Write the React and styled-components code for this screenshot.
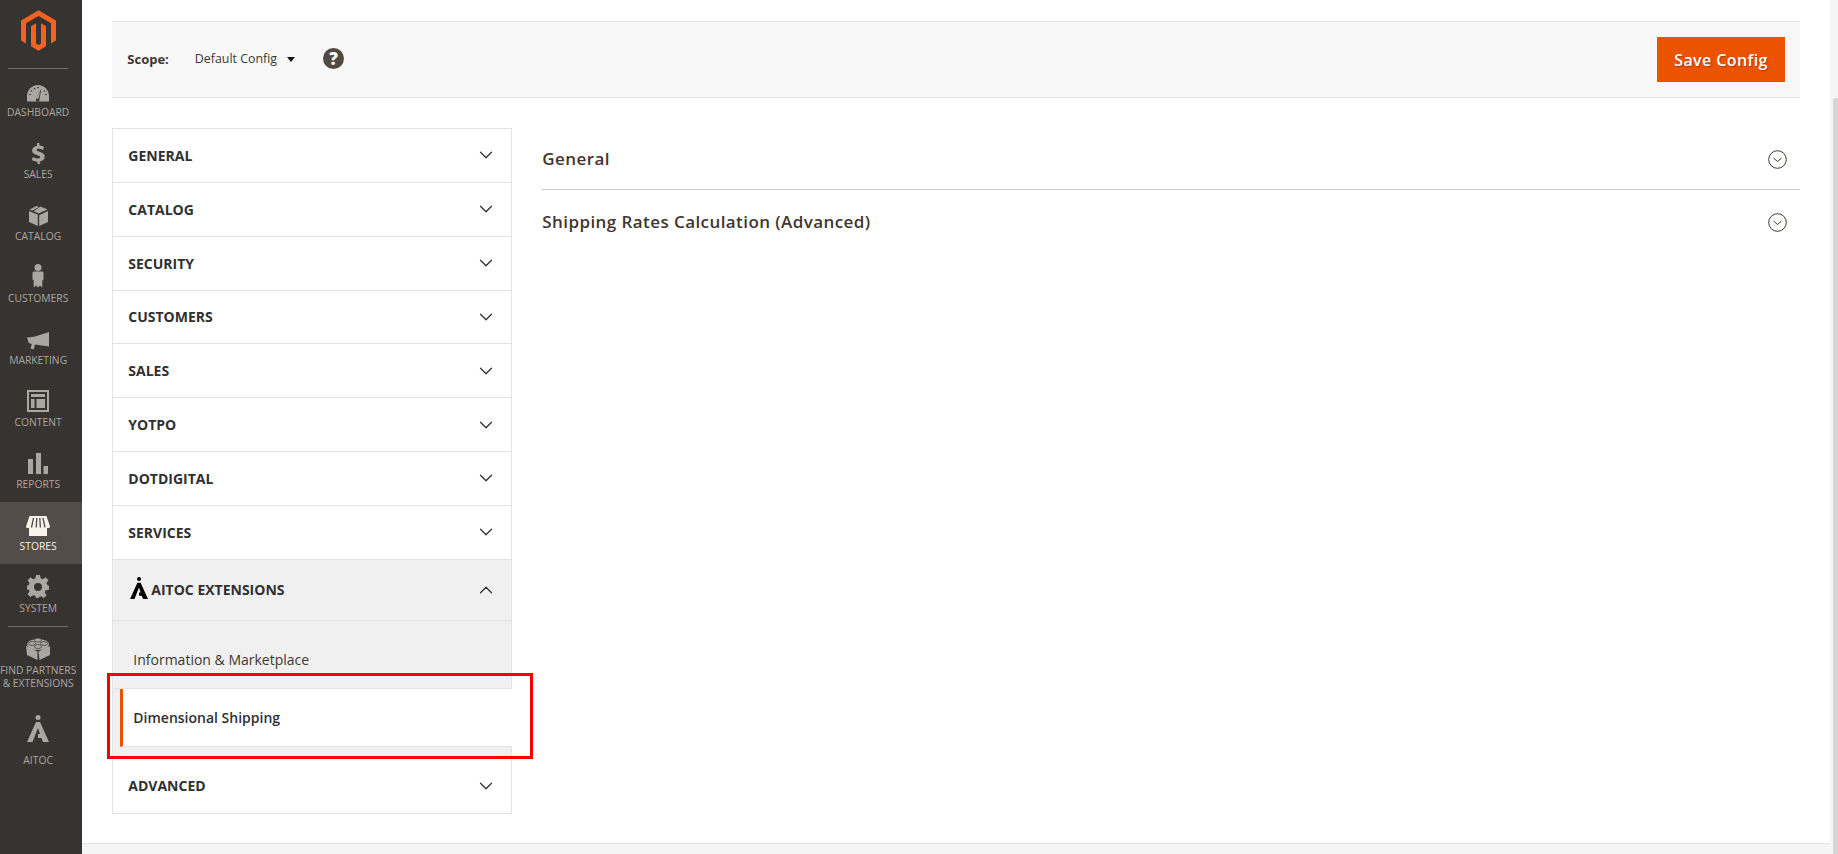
import React from 'react';
import styled, { createGlobalStyle } from 'styled-components';
import { ChevronDown, ChevronUp } from 'lucide-react';

const GlobalStyle = createGlobalStyle`
  html, body {
    margin: 0;
    height: 100%;
    overflow: hidden;
    background: #fff;
    font-family: "Open Sans", "Liberation Sans", sans-serif;
  }
  * { box-sizing: border-box; }
`;

const Page = styled.div`
  display: flex;
  width: 1838px;
  height: 854px;
  overflow: hidden;
`;

const Sidebar = styled.nav`
  flex: 0 0 82px;
  background: #373330;
  display: flex;
  flex-direction: column;
  align-items: stretch;
`;

const LogoBox = styled.div`
  height: 68px;
  padding: 10px 6px 0 0;
  display: flex;
  justify-content: center;
`;

const Divider = styled.div`
  height: 1px;
  margin: 0 14px -1px 8px;
  background: #736e69;
  position: relative;
`;

const NavItem = styled.div`
  height: ${p => p.$height || 62}px;
  padding-right: 6px;
  display: flex;
  flex-direction: column;
  align-items: center;
  background: ${p => (p.$active ? '#524d49' : 'transparent')};
  color: ${p => (p.$active ? '#f7f3eb' : '#aaa6a0')};
`;

const NavIcon = styled.div`
  height: ${p => p.$height || 35}px;
  width: 100%;
  display: flex;
  align-items: flex-end;
  justify-content: center;
  padding-bottom: 1px;
`;

const NavLabel = styled.div`
  font-size: 10.3px;
  line-height: 13px;
  text-align: center;
  white-space: nowrap;
  text-transform: uppercase;
  margin-top: ${p => p.$gap || 3}px;
`;

const Main = styled.main`
  flex: 1;
  display: flex;
  flex-direction: column;
  min-width: 0;
`;

const Content = styled.div`
  flex: 1;
  padding: 21px 30px 0;
`;

const ScopeBar = styled.div`
  height: 77px;
  display: flex;
  align-items: center;
  justify-content: space-between;
  padding: 0 15px;
  background: #f8f8f8;
  border-top: 1px solid #e3e3e3;
  border-bottom: 1px solid #e3e3e3;
`;

const ScopeLeft = styled.div`
  display: flex;
  align-items: center;
  margin-bottom: 2px;
`;

const ScopeLabel = styled.span`
  font-size: 13px;
  font-weight: 700;
  color: #41362f;
`;

const ScopeValue = styled.span`
  font-size: 12.4px;
  color: #41362f;
  margin-left: 26px;
`;

const Caret = styled.span`
  width: 0;
  height: 0;
  margin: 2px 0 0 10px;
  border-left: 4px solid transparent;
  border-right: 4px solid transparent;
  border-top: 5px solid #111;
`;

const Help = styled.span`
  width: 21px;
  height: 21px;
  margin-left: 28px;
  border-radius: 50%;
  background: #514943;
  color: #fff;
  font-size: 17px;
  font-weight: 800;
  line-height: 21px;
  text-align: center;
`;

const SaveButton = styled.button`
  width: 128px;
  height: 45px;
  border: 0;
  padding: 0;
  background: #eb5202;
  color: #fff;
  font-family: inherit;
  font-size: 16px;
  font-weight: 600;
  letter-spacing: 0.4px;
  text-shadow: 1px 1px 1px rgba(0, 0, 0, 0.3);
`;

const Columns = styled.div`
  display: flex;
  margin-top: 30px;
  gap: 30px;
  align-items: flex-start;
`;

const Tabs = styled.div`
  flex: 0 0 400px;
  display: flex;
  flex-direction: column;
  border: 1px solid #e3e3e3;
`;

const TabHead = styled.div`
  height: ${p => p.$height || 53.85}px;
  flex: none;
  display: flex;
  align-items: center;
  padding: 0 14px 0 15px;
  font-size: 14px;
  font-weight: 700;
  text-transform: uppercase;
  color: #303030;
  background: ${p => (p.$open ? '#f0f0f0' : '#fff')};
  border-bottom: ${p => (p.$last ? 0 : '1px solid #e3e3e3')};
  svg.chev { margin-left: auto; color: #303030; }
`;

const SubList = styled.div`
  flex: none;
  display: flex;
  flex-direction: column;
  background: #f0f0f0;
`;

const SubItem = styled.div`
  height: 68px;
  padding: 29px 0 0 20px;
  font-size: 14px;
  line-height: 20px;
  color: #41362f;
  border-bottom: 1px solid #e3e3e3;
`;

const SubItemActive = styled.div`
  height: 58px;
  display: flex;
  align-items: center;
  margin: 0 -1px 0 7px;
  padding-left: 10px;
  background: #fff;
  border-left: 3px solid #eb5202;
  border-bottom: 1px solid #e3e3e3;
  font-size: 14px;
  font-weight: 600;
  color: #303030;
`;

const SubGap = styled.div`
  height: 12px;
`;

const HeadIcon = styled.svg`
  width: 18px;
  height: 22px;
  margin: -4px 3px 0 2px;
`;

const Sections = styled.div`
  flex: 1;
  min-width: 0;
`;

const Section = styled.div`
  height: ${p => p.$height}px;
  display: flex;
  align-items: center;
  padding-right: 13px;
  font-size: 17px;
  font-weight: 600;
  letter-spacing: 0.42px;
  color: #41362f;
  border-bottom: ${p => (p.$line ? '1px solid #cccccc' : 0)};
`;

const SectionIcon = styled.svg`
  width: 19px;
  height: 19px;
  margin: 2px 0 0 auto;
`;

const Footer = styled.footer`
  height: 11px;
  flex: none;
  background: #f5f5f5;
  border-top: 1px solid #e3e3e3;
`;

const ScrollTrack = styled.div`
  flex: 0 0 8px;
  background: #f5f5f5;
  padding: 98px 0 0 3px;
`;

const ScrollThumb = styled.div`
  height: 756px;
  background: #d6d6d6;
  border-radius: 3px 0 0 0;
`;

const Annotation = styled.div`
  position: absolute;
  left: 107px;
  top: 673px;
  width: 426px;
  height: 86px;
  border: 3px solid #fa0000;
  pointer-events: none;
`;

const MagentoLogo = () => (
  <svg width="35" height="41" viewBox="1.6 0 20.8 24">
    <path fill="#f26322" d="M12 24l-4.455-2.572v-12l2.97-1.715v12.001l1.485.902 1.485-.902V7.713l2.971 1.715v12L12 24zM22.391 6v12l-2.969 1.714V7.713L12 3.43 4.574 7.713v12.001L1.609 18V6L12 0l10.391 6z" />
  </svg>
);

const G = '#aaa6a0';

const AitocMark = () => (
  <svg width="22" height="27" viewBox="0 0 22 27">
    <circle cx="11" cy="2.500" r="2.500" fill={G} />
    <path fill={G} d="M9 7h4l9 20h-6l-1.600-4H11v-4h2l-2-6-5.500 14H0z" />
  </svg>
);

const icons = {
  dashboard: (
    <svg width="22" height="17" viewBox="0 0 22 17">
      <path fill={G} d="M11 0C4.900 0 0 5 0 11.200V16.500h22v-5.300C22 5 17.100 0 11 0z" />
      <path fill="#373330" d="M14.500 3.500 12.800 12l-.6 4.500H9.300l-.3-2.500z" />
      <path fill={G} d="M13.400 6.500 11.800 12.600c-.2.900-.8 1.500-1.500 1.300-.7-.2-.9-1-.5-1.700z" />
      <g fill="#373330">
        <circle cx="4.500" cy="6" r=".8" /><circle cx="7.500" cy="3.600" r=".8" /><circle cx="11" cy="2.600" r=".8" />
        <circle cx="17.500" cy="6" r=".8" /><circle cx="19" cy="9.500" r=".8" /><circle cx="3" cy="9.500" r=".8" />
      </g>
    </svg>
  ),
  sales: (
    <svg width="14" height="21" viewBox="0 0 14 21">
      <path fill={G} d="M6 0h2.400v2.500c1.800.2 3.300.7 4.600 1.500l-1 3C10.700 6.200 9.200 5.700 7.700 5.700c-1.300 0-2 .5-2 1.200 0 .8.900 1.200 3 1.900 3.500 1.100 5 2.600 5 5 0 2.400-1.700 4.200-4.900 4.700V21H6.400v-2.300c-2.200-.1-4.200-.7-5.600-1.600l1-3.100c1.500.9 3.400 1.500 5.100 1.500 1.400 0 2.300-.5 2.300-1.400 0-.8-.8-1.300-2.700-1.900C3 11.600 1.100 10.100 1.100 7.500c0-2.400 1.700-4.200 4.900-4.800z" />
    </svg>
  ),
  catalog: (
    <svg width="19" height="20" viewBox="0 0 19 20">
      <path fill={G} d="M9.500 9 0 5v11l8.800 4V9.300zM10.200 9.300V20l8.800-4V5z" />
      <path fill={G} d="M7.500 0 .6 3.600 3 4.700 10 1zM11.500.6 4.600 5.300l4.900 2.200 9-3.900z" />
    </svg>
  ),
  customers: (
    <svg width="12" height="24" viewBox="0 0 12 24">
      <circle cx="6" cy="3.500" r="3.500" fill={G} />
      <path fill={G} d="M2 7.500h8c1 0 1.500.6 1.500 1.500v6.500l-1.200 1v7L8 21.500l-2 2-2-2-2.300 2v-7l-1.200-1V9c0-.9.500-1.500 1.500-1.500z" />
    </svg>
  ),
  marketing: (
    <svg width="22" height="18" viewBox="0 0 22 18">
      <path fill={G} d="M22 0v14.500L8 12.500 6.500 17.500l-3-1L4.800 12 1.800 11 0 5.500l3.500-.2L8 4.500z" />
    </svg>
  ),
  content: (
    <svg width="22" height="22" viewBox="0 0 22 22">
      <path fill={G} fillRule="evenodd" d="M0 0h22v22H0zM2 2v18h18V2z" />
      <path fill={G} d="M4 4h14v3H4zM4 9h3.500v9H4zM9.500 9H18v9H9.500z" />
    </svg>
  ),
  reports: (
    <svg width="20" height="21" viewBox="0 0 20 21">
      <path fill={G} d="M0 6h5v15H0zM8 0h5v21H8zM15.500 13H20v8h-4.500z" />
    </svg>
  ),
  stores: (
    <svg width="24" height="20" viewBox="0 0 24 20">
      <path fill="#f7f3eb" d="M3 12h18v8H3z" />
      <path fill="#f7f3eb" d="M3.500 0h17L24 10.500c0 1-1 1.500-2 1.500H2c-1 0-2-.5-2-1.500z" />
      <path stroke="#524d49" strokeWidth="1.300" d="M7.500 2 5.500 11.500M10.800 2l-.6 9.500M13.800 2l.6 9.500M17 2l2 9.500" />
    </svg>
  ),
  system: (
    <svg width="22" height="23" viewBox="0 0 22 23">
      <path fill={G} fillRule="evenodd" d="M9 0h4l.6 3.200 2.300 1L18.600 2.300l2.800 2.900-1.900 2.700 1 2.300L22 10.800v4l-3.300.5-1 2.300 1.900 2.700-2.800 2.700-2.700-1.800-2.300.9L12 23H9l-.6-1.900-2.300-.9-2.700 1.800-2.800-2.700 1.900-2.700-1-2.300L0 14.800v-4l1.500-.6 1-2.300L.6 5.200l2.800-2.900 2.700 1.900 2.300-1zM11 8a4 4 0 1 0 0 8 4 4 0 0 0 0-8z" />
    </svg>
  ),
  partners: (
    <svg width="24" height="23" viewBox="0 0 24 23">
      <path fill={G} d="M0 9l11.500 5.500V23L1 18zM12.500 14.500 24 9v9l-10.500 5z" />
      <ellipse cx="12" cy="7.500" rx="11" ry="5.500" fill={G} />
      <ellipse cx="12" cy="3" rx="3.500" ry="2" fill={G} stroke="#373330" strokeWidth=".7" />
      <ellipse cx="6" cy="6.500" rx="3.500" ry="2" fill={G} stroke="#373330" strokeWidth=".7" />
      <ellipse cx="18" cy="6.500" rx="3.500" ry="2" fill={G} stroke="#373330" strokeWidth=".7" />
      <ellipse cx="12" cy="9.500" rx="3.500" ry="2" fill={G} stroke="#373330" strokeWidth=".7" />
    </svg>
  ),
};

const navItems = [
  { label: 'Dashboard', icon: icons.dashboard },
  { label: 'Sales', icon: icons.sales },
  { label: 'Catalog', icon: icons.catalog },
  { label: 'Customers', icon: icons.customers },
  { label: 'Marketing', icon: icons.marketing },
  { label: 'Content', icon: icons.content },
  { label: 'Reports', icon: icons.reports },
  { label: 'Stores', icon: icons.stores, active: true },
  { label: 'System', icon: icons.system },
];

const tabs = ['General', 'Catalog', 'Security', 'Customers', 'Sales', 'Yotpo', 'Dotdigital', 'Services'];

const CircleChevron = () => (
  <SectionIcon viewBox="0 0 19 19">
    <circle cx="9.500" cy="9.500" r="8.800" fill="none" stroke="#41362f" strokeWidth="1" />
    <path d="M5.500 8l4 3.500 4-3.500" fill="none" stroke="#41362f" strokeWidth="1" />
  </SectionIcon>
);

const App = () => {
  return (
    <Page>
      <GlobalStyle />
      <Sidebar>
        <LogoBox><MagentoLogo /></LogoBox>
        <Divider />
        {navItems.map(item => (
          <NavItem key={item.label} $active={item.active}>
            <NavIcon>{item.icon}</NavIcon>
            <NavLabel>{item.label}</NavLabel>
          </NavItem>
        ))}
        <Divider />
        <NavItem $height={79}>
          <NavIcon>{icons.partners}</NavIcon>
          <NavLabel>Find Partners<br />&amp; Extensions</NavLabel>
        </NavItem>
        <NavItem>
          <NavIcon $height={38}><AitocMark /></NavIcon>
          <NavLabel $gap={11}>Aitoc</NavLabel>
        </NavItem>
      </Sidebar>
      <Main>
        <Content>
          <ScopeBar>
            <ScopeLeft>
              <ScopeLabel>Scope:</ScopeLabel>
              <ScopeValue>Default Config</ScopeValue>
              <Caret />
              <Help>?</Help>
            </ScopeLeft>
            <SaveButton>Save Config</SaveButton>
          </ScopeBar>
          <Columns>
            <Tabs>
              {tabs.map(t => (
                <TabHead key={t}>
                  {t}
                  <ChevronDown className="chev" size={22} strokeWidth={1.35} />
                </TabHead>
              ))}
              <TabHead $open $height={61}>
                <HeadIcon viewBox="0 0 22 27">
                  <circle cx="11" cy="2.500" r="2.500" fill="#000" />
                  <path fill="#000" d="M9 7h4l9 20h-6l-1.600-4H11v-4h2l-2-6-5.500 14H0z" />
                </HeadIcon>
                Aitoc Extensions
                <ChevronUp className="chev" size={22} strokeWidth={1.35} />
              </TabHead>
              <SubList>
                <SubItem>Information &amp; Marketplace</SubItem>
                <SubItemActive>Dimensional Shipping</SubItemActive>
                <SubGap />
              </SubList>
              <TabHead $last $height={54}>
                Advanced
                <ChevronDown className="chev" size={22} strokeWidth={1.35} />
              </TabHead>
            </Tabs>
            <Sections>
              <Section $height={62} $line>General<CircleChevron /></Section>
              <Section $height={62}>Shipping Rates Calculation (Advanced)<CircleChevron /></Section>
            </Sections>
          </Columns>
        </Content>
        <Footer />
      </Main>
      <ScrollTrack><ScrollThumb /></ScrollTrack>
      <Annotation />
    </Page>
  );
};

export default App;
